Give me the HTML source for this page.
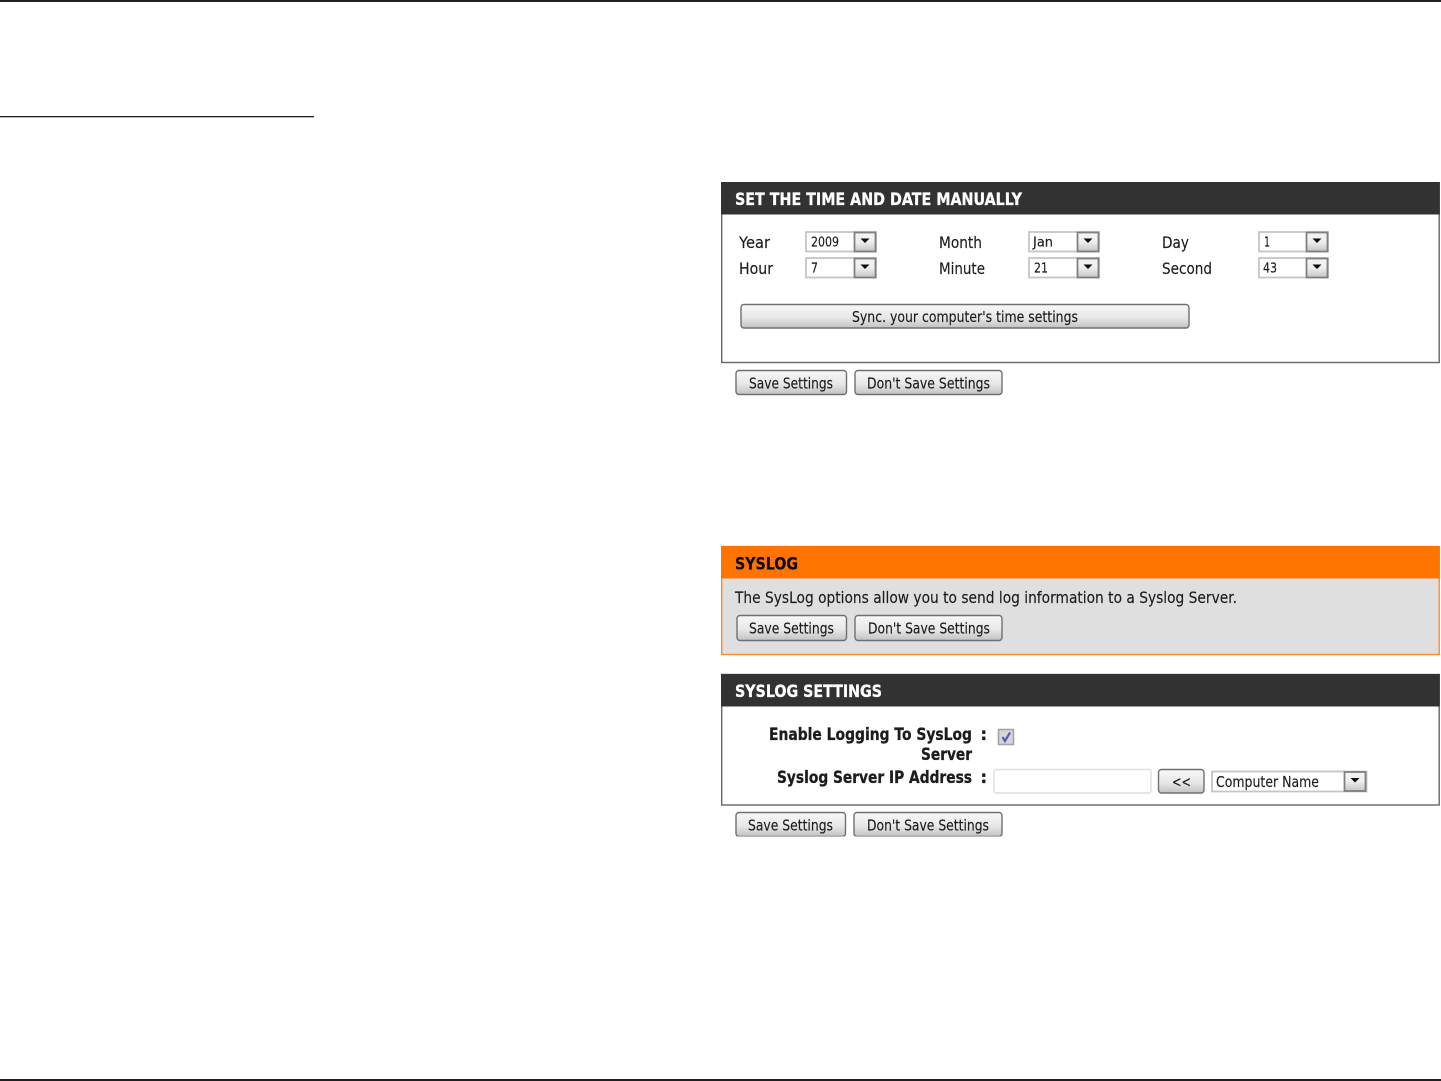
<!DOCTYPE html>
<html lang="en">
<head>
<meta charset="utf-8">
<title>Syslog Settings</title>
<style>
html,body{margin:0;padding:0;background:#fff;width:1441px;height:1081px;overflow:hidden}
svg{display:block}
text{font-family:"DejaVu Sans","Liberation Sans",sans-serif;fill:#1c1c1c;stroke:#1c1c1c;stroke-width:.15;font-size:16px}
.b{font-weight:bold;stroke-width:.3;font-size:16.5px}
.h{fill:#fff;stroke:#fff}
.s{font-size:13px}
.m{font-size:15px}
.btn{fill:url(#g);stroke:#707070;stroke-width:1.4}
.w{fill:#fff}
</style>
</head>
<body>
<svg width="1441" height="1081" viewBox="0 0 1441 1081" xmlns="http://www.w3.org/2000/svg">
<defs>
<linearGradient id="g" x1="0" y1="0" x2="0" y2="1">
<stop offset="0" stop-color="#f8f8f8"/><stop offset=".55" stop-color="#e8e8e8"/><stop offset="1" stop-color="#c2c2c2"/>
</linearGradient>
<linearGradient id="a" x1="0" y1="0" x2="0" y2="1">
<stop offset="0" stop-color="#f4f4f4"/><stop offset=".5" stop-color="#eeeeee"/><stop offset="1" stop-color="#c4c4c4"/>
</linearGradient>
<filter id="soft" x="0" y="0" width="100%" height="100%"><feGaussianBlur stdDeviation="0.35"/></filter>
<g id="ar">
<rect x="0.5" y="0.5" width="21" height="19" fill="url(#a)" stroke="#808080" stroke-width="1.8"/>
<path d="M6.500 6.500h9l-4.500 4.500z" fill="#111"/>
</g>
</defs>

<rect x="0" y="0" width="1441" height="2" fill="#231f20"/>
<rect x="0" y="116" width="314" height="1.3" fill="#231f20"/>
<rect x="0" y="1079" width="1441" height="2" fill="#231f20"/>

<g filter="url(#soft)">
<!-- Box 1 -->
<rect x="721.7" y="182.500" width="717.500" height="180" fill="#fff" stroke="#666" stroke-width="1.4"/>
<rect x="721" y="182" width="718.800" height="32.500" fill="#333"/>
<text class="b h" x="735" y="205" textLength="287" lengthAdjust="spacingAndGlyphs">SET THE TIME AND DATE MANUALLY</text>

<text x="739" y="248" textLength="31" lengthAdjust="spacingAndGlyphs">Year</text>
<text x="739" y="274" textLength="34" lengthAdjust="spacingAndGlyphs">Hour</text>
<text x="939" y="248" textLength="43" lengthAdjust="spacingAndGlyphs">Month</text>
<text x="939" y="274" textLength="46" lengthAdjust="spacingAndGlyphs">Minute</text>
<text x="1162" y="248" textLength="27" lengthAdjust="spacingAndGlyphs">Day</text>
<text x="1162" y="274" textLength="50" lengthAdjust="spacingAndGlyphs">Second</text>

<rect class="w" x="806" y="232" width="70" height="19.500" stroke="#c4c4cc" stroke-width="1.8"/>
<use href="#ar" x="854" y="232"/>
<text class="s" x="811" y="246.500" textLength="28" lengthAdjust="spacingAndGlyphs">2009</text>
<rect class="w" x="806" y="258" width="70" height="19.500" stroke="#c4c4cc" stroke-width="1.8"/>
<use href="#ar" x="854" y="258"/>
<text class="s" x="811" y="272.500" textLength="7" lengthAdjust="spacingAndGlyphs">7</text>

<rect class="w" x="1029" y="232" width="70" height="19.500" stroke="#c4c4cc" stroke-width="1.8"/>
<use href="#ar" x="1077" y="232"/>
<text class="s" x="1033" y="246.500" textLength="20" lengthAdjust="spacingAndGlyphs">Jan</text>
<rect class="w" x="1029" y="258" width="70" height="19.500" stroke="#c4c4cc" stroke-width="1.8"/>
<use href="#ar" x="1077" y="258"/>
<text class="s" x="1034" y="272.500" textLength="14" lengthAdjust="spacingAndGlyphs">21</text>

<rect class="w" x="1259" y="232" width="69" height="19.500" stroke="#c4c4cc" stroke-width="1.8"/>
<use href="#ar" x="1306" y="232"/>
<text class="s" x="1264" y="246.500" textLength="6" lengthAdjust="spacingAndGlyphs">1</text>
<rect class="w" x="1259" y="258" width="69" height="19.500" stroke="#c4c4cc" stroke-width="1.8"/>
<use href="#ar" x="1306" y="258"/>
<text class="s" x="1263" y="272.500" textLength="14" lengthAdjust="spacingAndGlyphs">43</text>

<rect class="btn" x="741" y="304.500" width="448" height="23.500" rx="3"/>
<text class="m" x="852" y="322" textLength="226" lengthAdjust="spacingAndGlyphs">Sync. your computer's time settings</text>

<rect class="btn" x="736" y="370.500" width="110.500" height="24" rx="3"/>
<text class="m" x="749" y="388.500" textLength="84" lengthAdjust="spacingAndGlyphs">Save Settings</text>
<rect class="btn" x="855" y="370.500" width="147" height="24" rx="3"/>
<text class="m" x="867" y="388.500" textLength="123" lengthAdjust="spacingAndGlyphs">Don't Save Settings</text>

<!-- Syslog -->
<rect x="721.7" y="546.500" width="717.500" height="108" fill="#dfdfdf" stroke="#ff8a2e" stroke-width="1.4"/>
<rect x="721" y="546" width="718.800" height="32.500" fill="#ff7300"/>
<text class="b" x="735" y="569.500" textLength="63" lengthAdjust="spacingAndGlyphs" style="fill:#111">SYSLOG</text>
<text x="735" y="603" textLength="502" lengthAdjust="spacingAndGlyphs">The SysLog options allow you to send log information to a Syslog Server.</text>
<rect class="btn" x="737" y="615.500" width="109.500" height="25" rx="3"/>
<text class="m" x="749" y="633.500" textLength="85" lengthAdjust="spacingAndGlyphs">Save Settings</text>
<rect class="btn" x="855" y="615.500" width="147" height="25" rx="3"/>
<text class="m" x="868" y="633.500" textLength="122" lengthAdjust="spacingAndGlyphs">Don't Save Settings</text>

<!-- Syslog settings -->
<rect x="721.7" y="674.500" width="717.500" height="130.500" fill="#fff" stroke="#666" stroke-width="1.4"/>
<rect x="721" y="674" width="718.800" height="32.500" fill="#333"/>
<text class="b h" x="735" y="697" textLength="147" lengthAdjust="spacingAndGlyphs">SYSLOG SETTINGS</text>

<text class="b" x="769" y="740" textLength="203" lengthAdjust="spacingAndGlyphs">Enable Logging To SysLog</text>
<text class="b" x="980.500" y="740">:</text>
<text class="b" x="921" y="760" textLength="51" lengthAdjust="spacingAndGlyphs">Server</text>
<text class="b" x="777" y="783" textLength="195" lengthAdjust="spacingAndGlyphs">Syslog Server IP Address</text>
<text class="b" x="980.500" y="783">:</text>

<rect x="998.500" y="729.500" width="15" height="15" fill="#d4d4dc" stroke="#a4a4a4" stroke-width="1.6"/>
<path d="M1002.500 737l2.500 4 5-8.500" fill="none" stroke="#4a5fb0" stroke-width="2.2"/>

<rect x="994" y="769.500" width="157" height="23.500" rx="2" fill="#fff" stroke="#dcdfe4" stroke-width="1.4"/>
<rect class="btn" x="1158.500" y="769.500" width="45.500" height="23.500" rx="3"/>
<text class="m" x="1172" y="787" textLength="19" lengthAdjust="spacingAndGlyphs">&lt;&lt;</text>

<rect class="w" x="1212" y="771.500" width="154.500" height="20" stroke="#c4c4cc" stroke-width="1.800"/>
<use href="#ar" x="1344" y="771.500"/>
<text class="m" x="1216" y="787" textLength="103" lengthAdjust="spacingAndGlyphs">Computer Name</text>

<rect class="btn" x="736" y="812.500" width="109.500" height="24" rx="3"/>
<text class="m" x="748" y="830.500" textLength="85" lengthAdjust="spacingAndGlyphs">Save Settings</text>
<rect class="btn" x="854" y="812.500" width="148" height="24" rx="3"/>
<text class="m" x="867" y="830.500" textLength="122" lengthAdjust="spacingAndGlyphs">Don't Save Settings</text>
</g>
</svg>
</body>
</html>
